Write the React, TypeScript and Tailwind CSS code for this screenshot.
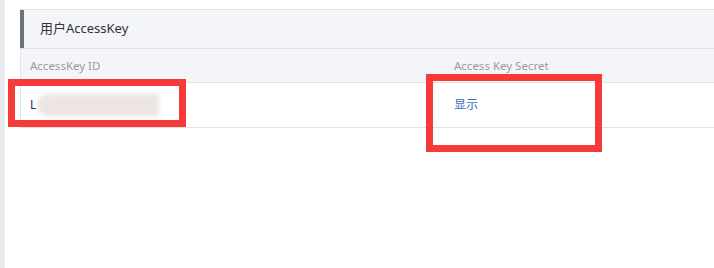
export default function App() {
  const font = { fontFamily: '"Noto Sans", "Noto Sans CJK SC", sans-serif' };

  return (
    <div className="relative flex w-[714px] h-[268px] bg-white overflow-hidden" style={font}>
      {/* left side rail */}
      <div className="w-[5px] h-full bg-[#e8ecf1] shrink-0"></div>

      <div className="flex-1 pl-[15px] pt-[9px] overflow-hidden">
        <div className="w-[760px]">
          {/* panel heading */}
          <div className="flex items-center h-[40px] bg-[#f3f5f9] border-t border-b border-[#dfe3e8]">
            <div className="w-[4px] h-full bg-[#6b737c]"></div>
            <span className="pl-[16px] text-[13px] text-[#333]">用户AccessKey</span>
          </div>

          {/* table */}
          <div className="border-l border-[#e3e6ea]">
            <div className="grid grid-cols-[424px_1fr] h-[34px] items-center bg-[#f4f5f9] border-b border-[#dfe3e8] text-[11.5px] text-[#9a9a9a]">
              <div className="pl-[9px]">AccessKey ID</div>
              <div className="pl-[9px]">Access Key Secret</div>
            </div>
            <div className="grid grid-cols-[424px_1fr] h-[45px] items-center border-b border-[#e3e3e3] text-[12px]">
              <div className="pl-[9px] flex items-center text-[#2f2b4a]">
                <span>L</span>
                <div className="ml-[1px] h-[22px] w-[122px] rounded-l-full bg-gradient-to-b from-[#ebe8e8] to-[#f0e2e2] blur-[2px]"></div>
              </div>
              <div className="pl-[9px]">
                <a className="text-[#3b6fc4] cursor-pointer">显示</a>
              </div>
            </div>
          </div>
        </div>
      </div>

      {/* annotation boxes */}
      <div className="absolute left-[8px] top-[79px] w-[178px] h-[48px] border-[7px] border-[#f63a3a]"></div>
      <div className="absolute left-[426px] top-[74px] w-[176px] h-[78px] border-[7px] border-[#f63a3a]"></div>
    </div>
  );
}
